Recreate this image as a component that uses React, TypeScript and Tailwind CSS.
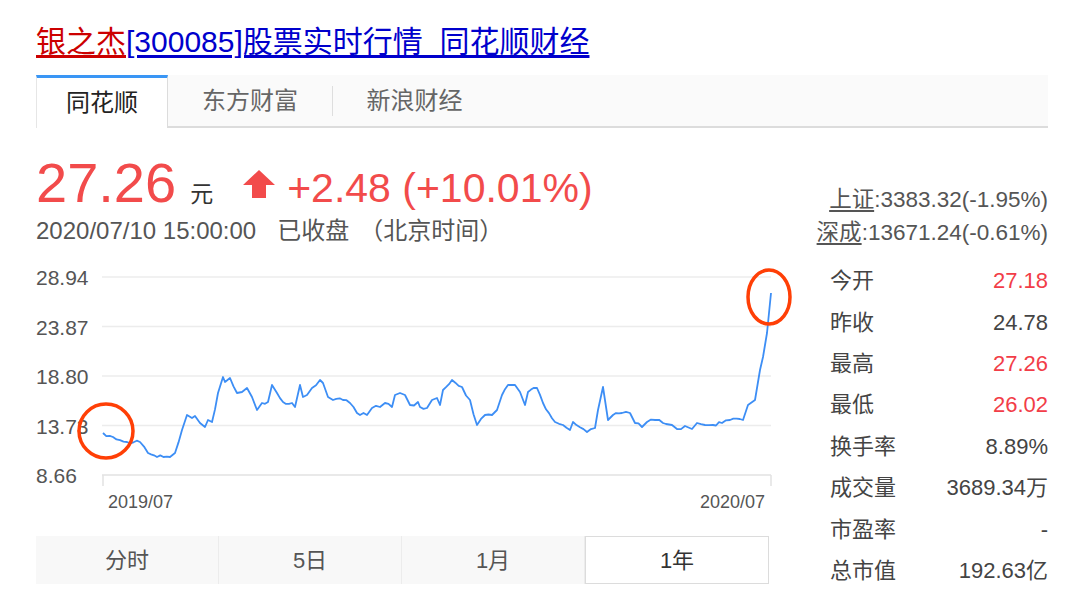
import React from 'react';

const font = { fontFamily: '"Liberation Sans", "Noto Sans CJK SC", sans-serif' };

// traced points of the 1-year line, in page coordinates
const raw: [number, number][] = [
  [103, 433], [113, 437], [127, 442], [140, 442], [148, 453], [157, 457], [170, 457], [175, 453],
  [182, 430], [187, 415], [192, 418], [195, 416], [200, 423], [205, 427], [208, 420], [212, 422],
  [218, 393], [223, 377], [225, 382], [230, 378], [237, 393], [242, 392], [247, 388], [252, 397],
  [257, 410], [262, 403], [268, 402], [272, 385], [277, 393], [283, 402], [292, 403], [295, 407],
  [300, 385], [303, 397], [307, 395], [312, 388], [320, 380], [323, 383], [328, 397], [333, 400],
  [343, 400], [350, 403], [357, 413], [360, 415], [367, 415], [372, 408], [380, 407], [385, 403],
  [392, 407], [395, 395], [400, 393], [405, 395], [410, 405], [418, 402], [420, 407], [427, 408],
  [432, 400], [437, 398], [440, 405], [443, 390], [452, 380], [462, 387], [470, 400], [477, 425],
  [485, 415], [492, 415], [497, 410], [502, 395], [508, 385], [515, 385], [520, 392], [525, 405],
  [528, 392], [537, 388], [543, 403], [555, 422], [563, 425], [570, 430], [573, 422], [587, 432],
  [595, 428], [598, 410], [603, 387], [608, 420], [613, 415], [622, 413], [630, 413], [635, 423],
  [642, 427], [647, 422], [655, 420], [663, 423], [672, 425], [677, 429], [685, 426], [692, 429],
  [697, 423], [705, 425], [713, 425], [722, 423], [730, 420], [743, 420], [748, 405], [755, 400],
  [760, 370], [763, 357], [767, 333], [771, 293],
];

const jitter = (i: number) => Math.sin(i * 12.9898) * 43758.5453 % 1;

const linePoints = (() => {
  const out: string[] = [];
  let k = 0;
  raw.forEach(([x, y], i) => {
    out.push(`${x},${y}`);
    const next = raw[i + 1];
    if (!next || next[0] - x < 5 || next[0] > 745) return;
    const steps = Math.floor((next[0] - x) / 3);
    for (let s = 1; s < steps; s++) {
      const t = s / steps;
      const px = x + (next[0] - x) * t;
      const py = y + (next[1] - y) * t + jitter(++k) * 2;
      out.push(`${px.toFixed(1)},${py.toFixed(1)}`);
    }
  });
  return out.join(' ');
})();

const grid = [277, 326.5, 376, 425.5, 475];
const yLabels = ['28.94', '23.87', '18.80', '13.73', '8.66'];

const stats = [
  { label: '今开', value: '27.18', red: true },
  { label: '昨收', value: '24.78' },
  { label: '最高', value: '27.26', red: true },
  { label: '最低', value: '26.02', red: true },
  { label: '换手率', value: '8.89%' },
  { label: '成交量', value: '3689.34万' },
  { label: '市盈率', value: '-' },
  { label: '总市值', value: '192.63亿' },
];

const ranges = ['分时', '5日', '1月', '1年'];

export default function App() {
  return (
    <div className="w-[1080px] h-[604px] bg-white pl-[36px] pr-[32px] overflow-hidden" style={font}>
      {/* Title */}
      <div className="pt-[24px] pb-[15px] text-[30px] leading-[36px]">
        <span className="text-[#cc0000] underline underline-offset-[3px]">银之杰</span>
        <span className="text-[#0000cc] underline underline-offset-[3px]">[300085]股票实时行情_同花顺财经</span>
      </div>

      {/* Source tabs */}
      <div className="flex h-[53px] bg-[#fafafa] border-b-2 border-[#dcdcdc]">
        <div className="w-[132px] h-[53px] -mb-[2px] bg-white border-t-[3px] border-t-[#3a96f5] border-l border-l-[#e6e6e6] border-r border-r-[#dcdcdc] flex items-center justify-center text-[24px] text-[#222]">
          同花顺
        </div>
        <div className="w-[164px] flex items-center justify-center text-[24px] text-[#666]">东方财富</div>
        <div className="w-px h-[30px] self-center bg-[#dedede]" />
        <div className="w-[163px] flex items-center justify-center text-[24px] text-[#666]">新浪财经</div>
      </div>

      <div className="flex">
        {/* Left: price and chart */}
        <div className="w-[760px] shrink-0">
          <div className="mt-[25px] h-[60px] flex items-baseline text-[#f24b4b]">
            <span className="text-[56px] leading-[60px]">27.26</span>
            <span className="ml-[14px] text-[23px] text-[#333]">元</span>
            <svg className="ml-[30px] self-center mt-[2px]" width="32" height="28" viewBox="0 0 32 28">
              <path d="M16 0 L32 15 H23 V28 H9 V15 H0 Z" fill="#f24b4b" />
            </svg>
            <span className="ml-[12px] text-[41px] leading-[60px]">+2.48 (+10.01%)</span>
          </div>
          <div className="mt-[3px] flex text-[24px] leading-[30px] text-[#555]">
            <span>2020/07/10 15:00:00</span>
            <span className="ml-[21px]">已收盘</span>
            <span className="ml-[10px]">（北京时间）</span>
          </div>

          <svg className="mt-[16px] block" width="760" height="270" viewBox="36 262 760 270">
            {grid.map((y, i) => (
              <line key={y} x1="102" x2="771" y1={y} y2={y} stroke={i === 4 ? '#e2e2e2' : '#ececec'} strokeWidth="1.5" />
            ))}
            <line x1="103" x2="103" y1="475" y2="486" stroke="#e2e2e2" strokeWidth="1.5" />
            <line x1="771" x2="771" y1="475" y2="486" stroke="#e2e2e2" strokeWidth="1.5" />
            {yLabels.map((t, i) => (
              <text key={t} x="36" y={grid[i] + 8} fontSize="21" fill="#555" style={font}>{t}</text>
            ))}
            <text x="108" y="508" fontSize="18" fill="#555" style={font}>2019/07</text>
            <text x="765" y="508" fontSize="18" fill="#555" textAnchor="end" style={font}>2020/07</text>
            <polyline points={linePoints} fill="none" stroke="#3d8ef5" strokeWidth="1.8" strokeLinejoin="round" />
            <circle cx="106" cy="431" r="27" fill="none" stroke="#ff3f06" strokeWidth="3.5" />
            <ellipse cx="769" cy="297" rx="21" ry="27" fill="none" stroke="#ff3f06" strokeWidth="3.5" />
          </svg>

          <div className="mt-[4px] w-[733px] h-[48px] flex bg-[#f8f8f8] text-[22px]">
            {ranges.map((r, i) =>
              i === 3 ? (
                <div key={r} className="flex-1 flex items-center justify-center bg-white border border-[#dcdcdc] text-[#333]">
                  {r}
                </div>
              ) : (
                <div key={r} className="flex-1 flex items-center justify-center border-r border-[#ececec] text-[#555]">
                  {r}
                </div>
              )
            )}
          </div>
        </div>

        {/* Right: index and quote stats */}
        <div className="flex-1 pt-[55px]">
          <div className="text-right text-[22.5px] leading-[33px] text-[#555]">
            <div>
              <span className="underline underline-offset-[3px]">上证</span>:3383.32(-1.95%)
            </div>
            <div>
              <span className="underline underline-offset-[3px]">深成</span>:13671.24(-0.61%)
            </div>
          </div>
          <div className="mt-[11px] pl-[34px]">
            {stats.map((s) => (
              <div key={s.label} className="h-[41.4px] flex items-center justify-between text-[22px]">
                <span className="text-[#444]">{s.label}</span>
                <span className={s.red ? 'text-[#f23d48]' : 'text-[#444]'}>{s.value}</span>
              </div>
            ))}
          </div>
        </div>
      </div>
    </div>
  );
}
